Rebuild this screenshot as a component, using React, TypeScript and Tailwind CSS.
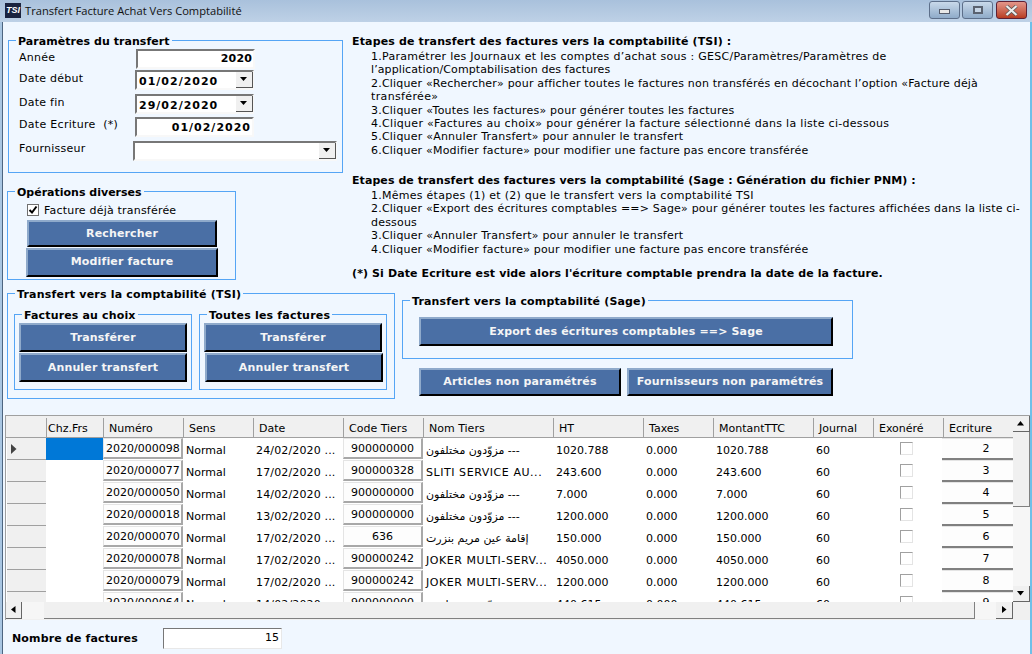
import React from "react";

const Button = ({ className, children }: { className: string; children: React.ReactNode }) => (
  <div className={`absolute flex items-center justify-center bg-[#4a6fa5] border-t-2 border-l-2 border-t-[#8faacb] border-l-[#8faacb] border-b-2 border-r-2 border-b-black border-r-black font-bold tracking-[0.15px] text-[#f5f5f5] text-[11px] ${className}`}>
    {children}
  </div>
);

const Group = ({ className, legend, legendClass }: { className: string; legend: string; legendClass: string }) => (
  <div className={`absolute border border-[#55a5f5] ${className}`}>
    <span className={`absolute -top-[6px] h-[14px] leading-[14px] px-[2px] bg-[#f0f7ff] font-bold text-black whitespace-nowrap ${legendClass}`}>{legend}</span>
  </div>
);

const Sunken = ({ className, children }: { className: string; children?: React.ReactNode }) => (
  <div className={`absolute flex items-center bg-white border-t-2 border-l-2 border-t-[#777] border-l-[#777] border-b-2 border-r-2 border-b-[#f8f8f8] border-r-[#f8f8f8] font-bold text-[11px] text-black ${className}`}>
    {children}
  </div>
);

const Arrow = ({ className }: { className: string }) => (
  <div className={`absolute flex items-center justify-center bg-[#f0f0f0] border-r border-b border-r-[#555] border-b-[#555] ${className}`}>
    <svg width="8" height="5" viewBox="0 0 8 5"><path d="M0 0h7L3.5 4z" fill="#000" /></svg>
  </div>
);

const Label = ({ className, children }: { className: string; children: React.ReactNode }) => (
  <div className={`absolute whitespace-nowrap leading-[14px] ${className}`}>{children}</div>
);

const Line = ({ className, children }: { className: string; children: React.ReactNode }) => (
  <div className={`h-[13.4px] leading-[14px] whitespace-nowrap ${className}`}>{children}</div>
);

const AR1 = "مزوّدون مختلفون ---";
const AR2 = "إقامة عين مريم بنزرت";
const rows = [
  ["2020/000098", "24/02/2020 ...", "900000000", AR1, "1020.788", "0.000", "1020.788", "2"],
  ["2020/000077", "17/02/2020 ...", "900000328", "SLITI SERVICE AU...", "243.600", "0.000", "243.600", "3"],
  ["2020/000050", "14/02/2020 ...", "900000000", AR1, "7.000", "0.000", "7.000", "4"],
  ["2020/000018", "13/02/2020 ...", "900000000", AR1, "1200.000", "0.000", "1200.000", "5"],
  ["2020/000070", "17/02/2020 ...", "636", AR2, "150.000", "0.000", "150.000", "6"],
  ["2020/000078", "17/02/2020 ...", "900000242", "JOKER MULTI-SERV...", "4050.000", "0.000", "4050.000", "7"],
  ["2020/000079", "17/02/2020 ...", "900000242", "JOKER MULTI-SERV...", "1200.000", "0.000", "1200.000", "8"],
  ["2020/000064", "14/02/2020 ...", "900000000", AR1, "440.615", "0.000", "440.615", "9"],
];

const headers = ["", "Chz.Frs", "Numéro", "Sens", "Date", "Code Tiers", "Nom Tiers", "HT", "Taxes", "MontantTTC", "Journal", "Exonéré", "Ecriture"];
const gridCols = "grid grid-cols-[40px_57px_80px_70px_90px_80px_130px_90px_70px_100px_60px_70px_70px]";
const cellBtn = "flex items-center border-t border-l border-t-[#e4e4e4] border-l-[#e4e4e4] border-b-2 border-b-[#a8a8a8] border-r-2 border-r-[#a8a8a8] bg-[#fdfdfd] h-[21px] pt-[2px]";

export default function App() {
  return (
    <div className="relative w-[1032px] h-[654px] overflow-hidden bg-[#f0f7ff] text-[11px] text-black [font-family:DejaVu_Sans,sans-serif]">
      {/* Window frame */}
      <div className="absolute left-0 top-0 w-[1032px] h-[22px] bg-gradient-to-b from-[#a9c1dc] to-[#bed1e6]" />
      <div className="absolute left-0 top-[22px] w-[2px] h-[632px] bg-[#a9c6e2]" />
      <div className="absolute left-[2px] top-[22px] w-[1px] h-[632px] bg-[#4d6580]" />
      <div className="absolute left-[1030px] top-[22px] w-[2px] h-[632px] bg-[#6fc0e8]" />

      <div className="absolute left-[5px] top-[3px] w-[16px] h-[15px] bg-[#1b2440] text-white flex items-center justify-center [font-family:Liberation_Sans,sans-serif] italic font-bold text-[9px] leading-none">TSI</div>
      <div className="absolute left-[25px] top-[3px] h-[16px] leading-[16px] text-[11.15px] whitespace-nowrap text-[#111] [font-family:Open_Sans,sans-serif]">Transfert Facture Achat Vers Comptabilité</div>

      {/* Window controls */}
      <div className="absolute left-[929px] top-[1px] w-[31px] h-[18px] rounded-[3px] border border-[#5d6f8a] bg-gradient-to-b from-[#c9d9ea] to-[#8fabc9] flex items-center justify-center">
        <div className="w-[11px] h-[5px] bg-[#e8e8e8] border border-[#555c6c] mt-[3px]" />
      </div>
      <div className="absolute left-[962px] top-[1px] w-[31px] h-[18px] rounded-[3px] border border-[#5d6f8a] bg-gradient-to-b from-[#c9d9ea] to-[#8fabc9] flex items-center justify-center">
        <div className="w-[10px] h-[8px] border-2 border-[#5a6270] bg-[#c6d5e6]" />
      </div>
      <div className="absolute left-[996px] top-[1px] w-[31px] h-[18px] rounded-[3px] border border-[#5e2034] bg-gradient-to-b from-[#e3968a] to-[#b83c20] flex items-center justify-center">
        <svg width="13" height="11" viewBox="0 0 13 11"><path d="M1.5 1 L11.5 10 M11.5 1 L1.5 10" stroke="#555" strokeWidth="3.6" /><path d="M1.5 1 L11.5 10 M11.5 1 L1.5 10" stroke="#eee" strokeWidth="2.2" /></svg>
      </div>

      {/* Paramètres */}
      <Group className="left-[8px] top-[40px] w-[335px] h-[133px]" legend="Paramètres du transfert" legendClass="left-[7px] tracking-[0.05px]" />
      <Label className="left-[19px] top-[51px] tracking-[0.25px]">Année</Label>
      <Sunken className="left-[136px] top-[49px] w-[119px] h-[20px] justify-end pr-[1px] tracking-[0.15px]">2020</Sunken>
      <Label className="left-[19px] top-[72px] tracking-[0.25px]">Date début</Label>
      <Sunken className="left-[135px] top-[70px] w-[119px] h-[20px] pl-[2px] pt-[4px] tracking-[1px]">01/02/2020</Sunken>
      <Arrow className="left-[236px] top-[72px] w-[17px] h-[16px]" />
      <Label className="left-[19px] top-[96px] tracking-[0.25px]">Date fin</Label>
      <Sunken className="left-[135px] top-[94px] w-[119px] h-[20px] pl-[2px] pt-[4px] tracking-[1px]">29/02/2020</Sunken>
      <Arrow className="left-[236px] top-[96px] w-[17px] h-[16px]" />
      <Label className="left-[19px] top-[118px] whitespace-pre tracking-[0.3px]">Date Ecriture  (*)</Label>
      <Sunken className="left-[135px] top-[117px] w-[119px] h-[20px] justify-end pr-[1px] pt-[2px] tracking-[1px]">01/02/2020</Sunken>
      <Label className="left-[19px] top-[142px] tracking-[0.25px]">Fournisseur</Label>
      <Sunken className="left-[133px] top-[141px] w-[204px] h-[20px]" />
      <Arrow className="left-[319px] top-[143px] w-[17px] h-[16px]" />

      {/* Opérations */}
      <Group className="left-[7px] top-[191px] w-[229px] h-[89px]" legend="Opérations diverses" legendClass="left-[7px]" />
      <div className="absolute left-[27px] top-[204px] w-[12px] h-[12px] bg-white border border-[#707070] flex items-center justify-center">
        <svg width="10" height="10" viewBox="0 0 10 10"><path d="M1.5 5 L4 7.5 L8.5 1.5" fill="none" stroke="#000" strokeWidth="2" /></svg>
      </div>
      <Label className="left-[44px] top-[204px] tracking-[0.2px]">Facture déjà transférée</Label>
      <Button className="left-[27px] top-[220px] w-[190px] h-[27px] pt-[2px]">Rechercher</Button>
      <Button className="left-[26px] top-[248px] w-[192px] h-[29px]">Modifier facture</Button>

      {/* Transfert TSI */}
      <Group className="left-[7px] top-[293px] w-[388px] h-[106px]" legend="Transfert vers la comptabilité (TSI)" legendClass="left-[7px] tracking-[0.2px]" />
      <Group className="left-[14px] top-[314px] w-[178px] h-[76px]" legend="Factures au choix" legendClass="left-[7px] tracking-[0.15px]" />
      <Group className="left-[199px] top-[314px] w-[188px] h-[76px]" legend="Toutes les factures" legendClass="left-[7px] tracking-[0.2px]" />
      <Button className="left-[19px] top-[323px] w-[168px] h-[29px] pt-[2px]">Transférer</Button>
      <Button className="left-[19px] top-[353px] w-[168px] h-[29px] pt-[2px]">Annuler transfert</Button>
      <Button className="left-[204px] top-[323px] w-[178px] h-[29px] pt-[2px]">Transférer</Button>
      <Button className="left-[205px] top-[353px] w-[178px] h-[29px] pt-[2px]">Annuler transfert</Button>

      {/* Transfert Sage */}
      <Group className="left-[402px] top-[300px] w-[451px] h-[59px]" legend="Transfert vers la comptabilité (Sage)" legendClass="left-[7px] tracking-[0.15px]" />
      <Button className="left-[419px] top-[317px] w-[414px] h-[29px] pt-[2px]">Export des écritures comptables ==&gt; Sage</Button>
      <Button className="left-[419px] top-[368px] w-[202px] h-[28px]">Articles non paramétrés</Button>
      <Button className="left-[627px] top-[368px] w-[206px] h-[28px]">Fournisseurs non paramétrés</Button>

      {/* Instructions */}
      <Label className="left-[352px] top-[35px] font-bold tracking-[0.15px]">Etapes de transfert des factures vers la comptabilité (TSI) :</Label>
      <div className="absolute left-[371px] top-[50px] flex flex-col">
        <Line className="tracking-[0.28px]">1.Paramétrer les Journaux et les comptes d’achat sous : GESC/Paramètres/Paramètres de</Line>
        <Line className="tracking-[0.1px]">l’application/Comptabilisation des factures</Line>
        <Line className="tracking-[0.19px]">2.Cliquer «Rechercher» pour afficher toutes le factures non transférés en décochant l’option «Facture déjà</Line>
        <Line className="tracking-[0.36px]">transférée»</Line>
        <Line className="tracking-[0.22px]">3.Cliquer «Toutes les factures» pour générer toutes les factures</Line>
        <Line className="tracking-[0.3px]">4.Cliquer «Factures au choix» pour générer la facture sélectionné dans la liste ci-dessous</Line>
        <Line className="tracking-[0.22px]">5.Cliquer «Annuler Transfert» pour annuler le transfert</Line>
        <Line className="tracking-[0.2px]">6.Cliquer «Modifier facture» pour modifier une facture pas encore transférée</Line>
      </div>

      <Label className="left-[352px] top-[174px] font-bold tracking-[0.07px]">Etapes de transfert des factures vers la comptabilité (Sage : Génération du fichier PNM) :</Label>
      <div className="absolute left-[371px] top-[189px] flex flex-col">
        <Line className="tracking-[0.26px]">1.Mêmes étapes (1) et (2) que le transfert vers la comptabilité TSI</Line>
        <Line className="tracking-[0.19px]">2.Cliquer «Export des écritures comptables ==&gt; Sage» pour générer toutes les factures affichées dans la liste ci-</Line>
        <Line className="tracking-[0.2px]">dessous</Line>
        <Line className="tracking-[0.22px]">3.Cliquer «Annuler Transfert» pour annuler le transfert</Line>
        <Line className="tracking-[0.2px]">4.Cliquer «Modifier facture» pour modifier une facture pas encore transférée</Line>
      </div>
      <Label className="left-[352px] top-[267px] font-bold tracking-[0.11px]">(*) Si Date Ecriture est vide alors l'écriture comptable prendra la date de la facture.</Label>

      {/* Grid */}
      <div className="absolute left-[5px] top-[415px] w-[1025px] h-[205px] bg-[#f0f0f0] border-t border-l border-[#a0a0a0]" />
      <div className={`absolute left-[6px] top-[416px] w-[1007px] h-[22px] bg-[#f0f0f0] border-b border-b-[#a0a0a0] ${gridCols}`}>
        {headers.map((h, i) => (
          <div key={i} className={`flex items-center h-[19px] mt-[2px] pt-[4px] whitespace-nowrap ${i === 0 ? "" : i === 1 ? "pl-[1px] border-l border-l-[#a0a0a0]" : "pl-[5px] border-l border-l-[#a0a0a0]"}`}>{h}</div>
        ))}
      </div>
      <div className="absolute left-[6px] top-[438px] w-[1007px] h-[164px] overflow-hidden bg-white">
        {rows.map((r, i) => (
          <div key={i} className={`h-[22px] ${gridCols}`}>
            <div className="h-[22px] bg-[#f0f0f0] border-b border-b-[#a0a0a0] flex items-center pl-[4px] ml-[1px] w-[39px]">
              {i === 0 && <svg width="6" height="10" viewBox="0 0 6 10"><path d="M0 0 L5.5 5 L0 10z" fill="#444" /></svg>}
            </div>
            <div className={`h-[22px] ${i === 0 ? "bg-[#0078d7]" : ""}`} />
            <div className={`${cellBtn} pl-[2px]`}>{r[0]}</div>
            <div className="flex items-center pl-[3px] pt-[4px]">Normal</div>
            <div className="flex items-center pl-[3px] pt-[4px] whitespace-nowrap tracking-[0.15px]">{r[1]}</div>
            <div className={`${cellBtn} justify-center`}>{r[2]}</div>
            <div className={`flex items-center pl-[3px] pt-[4px] whitespace-nowrap overflow-hidden ${/[A-Z]/.test(r[3]) ? "tracking-[0.55px]" : ""}`}>{r[3]}</div>
            <div className="flex items-center pl-[3px] pt-[4px]">{r[4]}</div>
            <div className="flex items-center pl-[3px] pt-[4px]">{r[5]}</div>
            <div className="flex items-center pl-[3px] pt-[4px]">{r[6]}</div>
            <div className="flex items-center pl-[3px] pt-[4px]">60</div>
            <div className="flex items-start justify-center pt-[4px]"><div className="w-[13px] h-[13px] -ml-[3px] border border-t-[#a0a0a0] border-l-[#a0a0a0] border-b-[#e4e4e4] border-r-[#e4e4e4] bg-white" /></div>
            <div className="flex items-center justify-center -ml-[1px] pl-[17px] h-[22px] border-t border-t-[#e4e4e4] border-b-2 border-b-[#808080] bg-[#fdfdfd] pt-[1px]">{r[7]}</div>
          </div>
        ))}
      </div>

      {/* Vertical scrollbar */}
      <div className="absolute left-[1013px] top-[416px] w-[17px] h-[186px] bg-[radial-gradient(#cfcfcf_0.6px,#f6f6f6_0.6px)] bg-[length:2px_2px]" />
      <div className="absolute left-[1013px] top-[416px] w-[17px] h-[16px] bg-[#f0f0f0] border-r border-b border-r-[#666] border-b-[#666] flex items-center justify-center">
        <svg width="8" height="5" viewBox="0 0 8 5"><path d="M0 4.5h7L3.5 0z" fill="#000" /></svg>
      </div>
      <div className="absolute left-[1013px] top-[432px] w-[17px] h-[75px] bg-[#f0f0f0] border-r border-b border-r-[#808080] border-b-[#808080]" />
      <div className="absolute left-[1013px] top-[586px] w-[17px] h-[16px] bg-[#f0f0f0] border-r border-b border-r-[#666] border-b-[#666] flex items-center justify-center">
        <svg width="8" height="5" viewBox="0 0 8 5"><path d="M0 0h7L3.5 4.5z" fill="#000" /></svg>
      </div>

      {/* Horizontal scrollbar */}
      <div className="absolute left-[6px] top-[602px] w-[1007px] h-[17px] bg-[radial-gradient(#cfcfcf_0.6px,#f6f6f6_0.6px)] bg-[length:2px_2px]" />
      <div className="absolute left-[6px] top-[602px] w-[16px] h-[17px] bg-[#f0f0f0] border-r border-b border-r-[#666] border-b-[#666] flex items-center justify-center">
        <svg width="5" height="8" viewBox="0 0 5 8"><path d="M4.5 0v7L0 3.5z" fill="#000" /></svg>
      </div>
      <div className="absolute left-[44px] top-[602px] w-[931px] h-[17px] bg-[#f0f0f0] border-r border-b border-r-[#808080] border-b-[#808080]" />
      <div className="absolute left-[996px] top-[602px] w-[17px] h-[17px] bg-[#f0f0f0] border-r border-b border-r-[#666] border-b-[#666] flex items-center justify-center">
        <svg width="5" height="8" viewBox="0 0 5 8"><path d="M0 0v7L4.5 3.5z" fill="#000" /></svg>
      </div>
      <div className="absolute left-[1013px] top-[602px] w-[17px] h-[17px] bg-[#f0f0f0]" />

      {/* Footer */}
      <Label className="left-[12px] top-[632px] font-bold tracking-[0.15px]">Nombre de factures</Label>
      <div className="absolute left-[163px] top-[628px] w-[119px] h-[21px] bg-white border border-t-[#777] border-l-[#777] border-b-[#e8e8e8] border-r-[#e8e8e8] flex items-center justify-end pr-[2px]">15</div>
    </div>
  );
}
